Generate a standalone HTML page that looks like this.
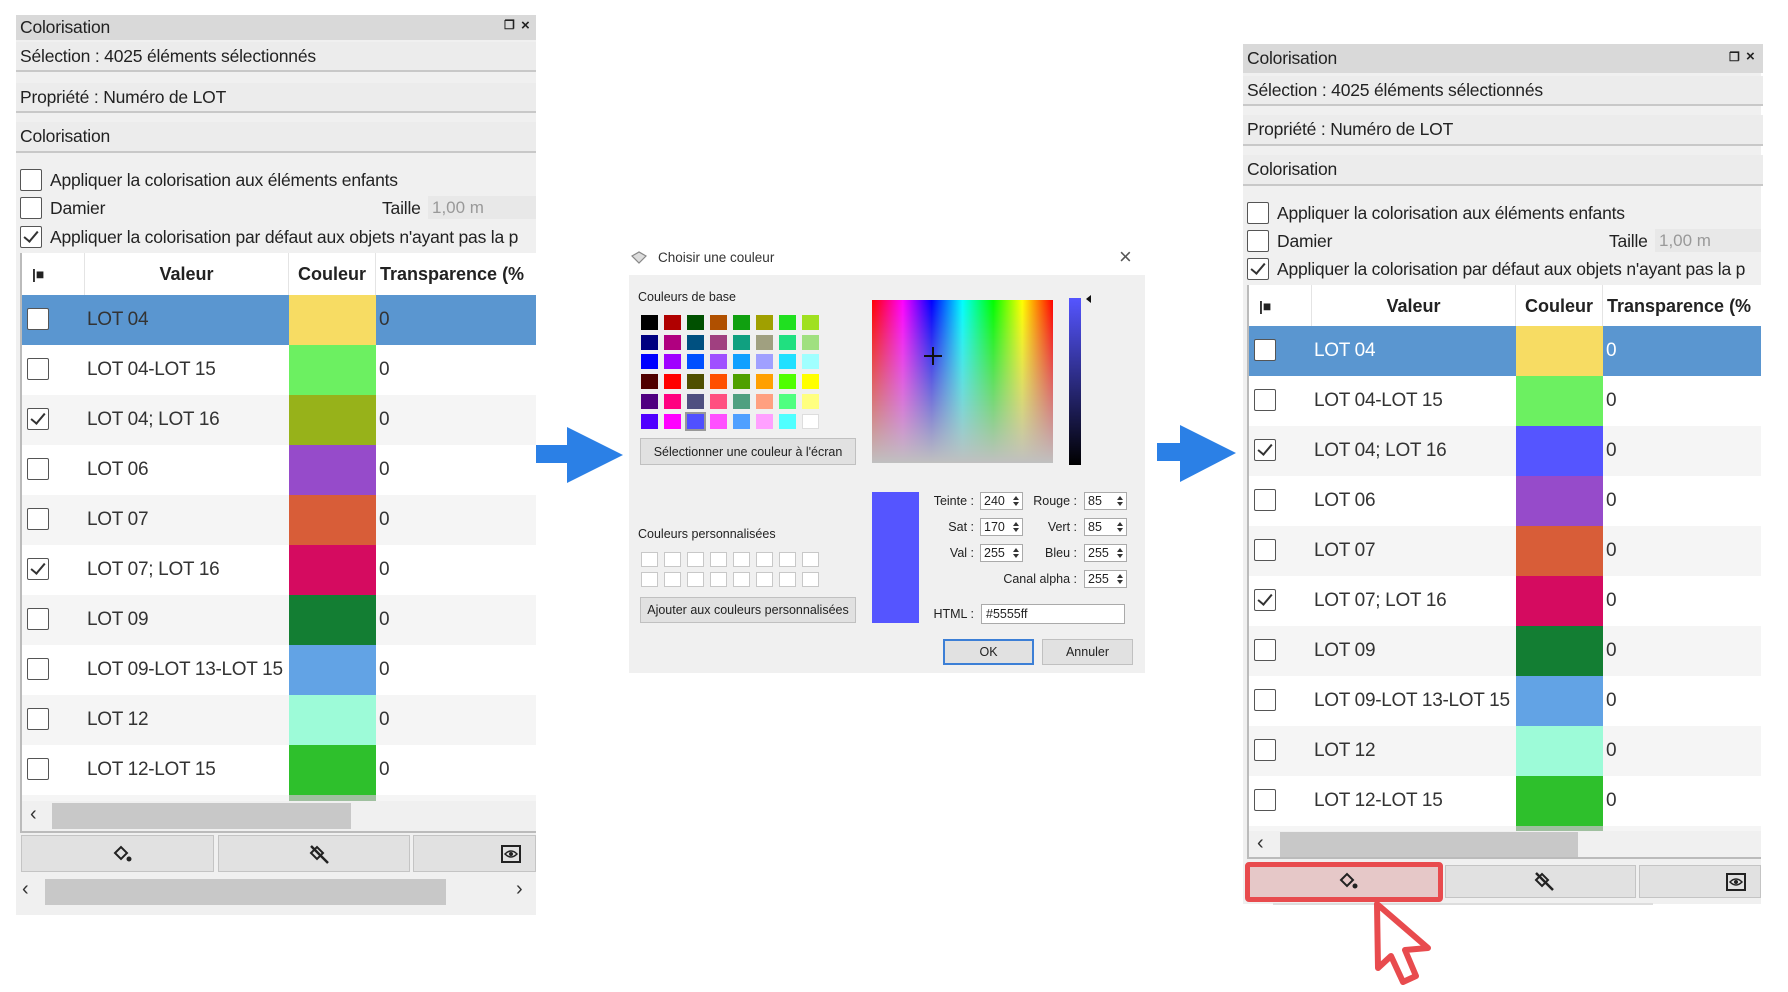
<!DOCTYPE html>
<html><head><meta charset="utf-8">
<style>
*{box-sizing:border-box;margin:0;padding:0}
body{width:1788px;height:992px;background:#fff;position:relative;overflow:hidden;font-family:"Liberation Sans",sans-serif;color:#222}
.a{position:absolute}
.panel{position:absolute;width:520px;height:900px;background:#f0f0f0}
.bar{position:absolute;left:0;width:520px;background:#ececec;border-bottom:2px solid #c8c8c8;font-size:17.5px;padding-left:4px;display:flex;align-items:center;letter-spacing:-0.2px}
.cb{position:absolute;width:22px;height:22px;border:1.5px solid #555;background:#fff;border-radius:2px}
.cb.k::after{content:"";position:absolute;left:6px;top:1px;width:6px;height:12px;border:solid #333;border-width:0 2px 2px 0;transform:rotate(40deg)}
.lbl{position:absolute;font-size:17.5px;white-space:nowrap;letter-spacing:-0.2px}
.tbl{position:absolute;left:4px;top:238px;width:516px;height:580px;background:#fff;border-left:2px solid #bbb;border-bottom:2px solid #bbb;overflow:hidden}
.hd{position:absolute;top:0;height:42px;font-weight:bold;font-size:18px;display:flex;align-items:center;justify-content:center;border-right:1px solid #e4e4e4}
.row{position:absolute;left:0;width:516px;height:50px}
.row .t{position:absolute;left:65px;top:14px;font-size:19px;color:#333;white-space:nowrap;letter-spacing:-0.3px}
.row .c{position:absolute;left:267px;width:87px;top:0;height:50px}
.row .z{position:absolute;left:357px;top:14px;font-size:19px;color:#333}
.row .cb{left:5px;top:13px}
.btn{position:absolute;top:820px;height:37px;background:#e1e1e1;border:1px solid #c4c4c4}
.sw{position:absolute;width:17px;height:15px}
.cu{position:absolute;width:17px;height:15px;background:#fff;border:1px solid #c8c8c8}
.dbtn{position:absolute;background:#e1e1e1;border:1px solid #c0c0c0;font-size:12.5px;display:flex;align-items:center;justify-content:center;white-space:nowrap}
.dl{position:absolute;font-size:12.5px;text-align:right;white-space:nowrap}
.spin{position:absolute;width:43px;height:18px;background:#fff;border:1px solid #aaa;font-size:12.5px;padding-left:3px;line-height:16px}
.spin::after{content:"";position:absolute;right:3px;top:3px;border:3px solid transparent;border-bottom:4px solid #333;border-top:0}
.spin::before{content:"";position:absolute;right:3px;bottom:3px;border:3px solid transparent;border-top:4px solid #333;border-bottom:0}
</style></head><body>

<!-- LEFT PANEL -->
<div class="panel" style="left:16px;top:15px;">
  <div class="bar" style="top:0;height:25px;background:#d9d9d9;border-bottom:none;">Colorisation</div>
  <div class="lbl" style="left:488px;top:3px;font-size:12px;font-weight:bold">&#x2750;</div>
  <div class="lbl" style="left:505px;top:2px;font-size:15px;font-weight:bold">×</div>
  <div class="bar" style="top:27px;height:30px;">Sélection : 4025 éléments sélectionnés</div>
  <div class="bar" style="top:68px;height:30px;">Propriété : Numéro de LOT</div>
  <div class="bar" style="top:107px;height:31px;">Colorisation</div>
  <div class="cb" style="left:4px;top:154px"></div><div class="lbl" style="left:34px;top:155px">Appliquer la colorisation aux éléments enfants</div>
  <div class="cb" style="left:4px;top:182px"></div><div class="lbl" style="left:34px;top:183px">Damier</div>
  <div class="lbl" style="left:366px;top:183px">Taille</div>
  <div class="a" style="left:412px;top:181px;width:108px;height:23px;background:#e8e8e8;color:#999;font-size:17px;padding:2px 4px">1,00 m</div>
  <div class="cb k" style="left:4px;top:211px"></div><div class="lbl" style="left:34px;top:212px">Appliquer la colorisation par défaut aux objets n'ayant pas la p</div>
  <div class="tbl">
    <div class="hd" style="left:0;width:63px;justify-content:flex-start;padding-left:10px;font-size:14px">|■</div>
    <div class="hd" style="left:63px;width:204px">Valeur</div>
    <div class="hd" style="left:267px;width:87px">Couleur</div>
    <div class="hd" style="left:354px;width:170px;justify-content:flex-start;padding-left:4px">Transparence (%</div>
    <div class="row" style="top:42px;background:#5a96d0"><div class="cb"></div><div class="t">LOT 04</div><div class="c" style="background:#f7dc63"></div><div class="z">0</div></div>
    <div class="row" style="top:92px;background:#fff"><div class="cb"></div><div class="t">LOT 04-LOT 15</div><div class="c" style="background:#6cf061"></div><div class="z">0</div></div>
    <div class="row" style="top:142px;background:#f5f5f5"><div class="cb k"></div><div class="t">LOT 04; LOT 16</div><div class="c" style="background:#97b21a"></div><div class="z">0</div></div>
    <div class="row" style="top:192px;background:#fff"><div class="cb"></div><div class="t">LOT 06</div><div class="c" style="background:#964bca"></div><div class="z">0</div></div>
    <div class="row" style="top:242px;background:#f5f5f5"><div class="cb"></div><div class="t">LOT 07</div><div class="c" style="background:#d85d38"></div><div class="z">0</div></div>
    <div class="row" style="top:292px;background:#fff"><div class="cb k"></div><div class="t">LOT 07; LOT 16</div><div class="c" style="background:#d50b60"></div><div class="z">0</div></div>
    <div class="row" style="top:342px;background:#f5f5f5"><div class="cb"></div><div class="t">LOT 09</div><div class="c" style="background:#137e33"></div><div class="z">0</div></div>
    <div class="row" style="top:392px;background:#fff"><div class="cb"></div><div class="t">LOT 09-LOT 13-LOT 15</div><div class="c" style="background:#62a3e5"></div><div class="z">0</div></div>
    <div class="row" style="top:442px;background:#f5f5f5"><div class="cb"></div><div class="t">LOT 12</div><div class="c" style="background:#9dfbd8"></div><div class="z">0</div></div>
    <div class="row" style="top:492px;background:#fff"><div class="cb"></div><div class="t">LOT 12-LOT 15</div><div class="c" style="background:#2ec02c"></div><div class="z">0</div></div>
    <div class="row" style="top:542px;height:6px;background:#f5f5f5"><div class="c" style="height:6px;background:#9fc09f"></div></div>
    <div class="a" style="left:0;top:548px;width:516px;height:30px;background:#f0f0f0"></div>
    <div class="a" style="left:8px;top:550px;font-size:20px;color:#333">‹</div>
    <div class="a" style="left:30px;top:550px;width:299px;height:26px;background:#c8c8c8"></div>
  </div>
  <div class="btn" style="left:5px;width:193px"></div>
  <div class="btn" style="left:202px;width:192px"></div>
  <div class="btn" style="left:397px;width:123px"></div>
  <svg class="a" style="left:96px;top:829px" width="24" height="20" viewBox="0 0 24 20"><path d="M3 9 L9 3 L15 9 L9 15 Z" fill="none" stroke="#222" stroke-width="2"/><circle cx="17" cy="15" r="2.5" fill="#222"/></svg>
  <svg class="a" style="left:292px;top:829px" width="24" height="22" viewBox="0 0 24 22"><path d="M3 9 L9 3 L15 9 L9 15 Z" fill="none" stroke="#222" stroke-width="2"/><path d="M3 2 L20 19" stroke="#222" stroke-width="2.5"/></svg>
  <svg class="a" style="left:484px;top:829px" width="22" height="20" viewBox="0 0 22 20"><rect x="2" y="2" width="18" height="16" fill="none" stroke="#222" stroke-width="2"/><path d="M5 10 Q11 4 17 10 Q11 16 5 10Z" fill="none" stroke="#222" stroke-width="1.5"/><circle cx="11" cy="10" r="2" fill="#222"/></svg>
  <div class="a" style="left:0;top:863px;width:520px;height:27px;background:#f0f0f0"></div>
  <div class="a" style="left:6px;top:863px;font-size:20px;color:#333">‹</div>
  <div class="a" style="left:29px;top:864px;width:401px;height:26px;background:#c8c8c8"></div>
  <div class="a" style="left:500px;top:863px;font-size:20px;color:#333">›</div>
</div>

<!-- LEFT ARROW -->
<svg class="a" style="left:530px;top:420px" width="100" height="70"><polygon points="6,25 37,25 37,7 93,35 37,63 37,43 6,43" fill="#2b80e6"/></svg>

<!-- DIALOG -->
<svg class="a" style="left:630px;top:250px" width="18" height="16" viewBox="0 0 18 16"><path d="M2 6 L9 2 L16 6 L9 13 Z" fill="#ddd" stroke="#888" stroke-width="1.2"/></svg>
<div class="a" style="left:658px;top:250px;font-size:13.5px;color:#333">Choisir une couleur</div>
<div class="a" style="left:1119px;top:244px;font-size:22px;color:#555;font-weight:300">×</div>
<div class="a" style="left:629px;top:275px;width:516px;height:398px;background:#f0f0f0"></div>
<div class="a" style="left:638px;top:290px;font-size:12.5px">Couleurs de base</div>
<div id="sw"></div>
<div class="dbtn" style="left:640px;top:438px;width:216px;height:27px">Sélectionner une couleur à l'écran</div>
<div class="a" style="left:872px;top:300px;width:181px;height:163px;background:linear-gradient(to bottom,rgba(192,192,192,0),#c0c0c0),linear-gradient(to right,#f00,#f0f 17%,#00f 33%,#0ff 50%,#0f0 67%,#ff0 83%,#f00)"></div>
<div class="a" style="left:924px;top:355px;width:18px;height:2px;background:#111"></div>
<div class="a" style="left:932px;top:347px;width:2px;height:18px;background:#111"></div>
<div class="a" style="left:1069px;top:298px;width:12px;height:167px;background:linear-gradient(#5555ff,#000)"></div>
<div class="a" style="left:1082px;top:295px;border:4px solid transparent;border-right:5px solid #111"></div>
<div class="a" style="left:638px;top:527px;font-size:12.5px">Couleurs personnalisées</div>
<div id="cu"></div>
<div class="dbtn" style="left:640px;top:597px;width:216px;height:26px">Ajouter aux couleurs personnalisées</div>
<div class="a" style="left:872px;top:492px;width:47px;height:131px;background:#5555ff"></div>
<div class="dl" style="left:900px;width:74px;top:494px">Teinte :</div><div class="spin" style="left:980px;top:492px">240</div>
<div class="dl" style="left:900px;width:74px;top:520px">Sat :</div><div class="spin" style="left:980px;top:518px">170</div>
<div class="dl" style="left:900px;width:74px;top:546px">Val :</div><div class="spin" style="left:980px;top:544px">255</div>
<div class="dl" style="left:1020px;width:57px;top:494px">Rouge :</div><div class="spin" style="left:1084px;top:492px">85</div>
<div class="dl" style="left:1020px;width:57px;top:520px">Vert :</div><div class="spin" style="left:1084px;top:518px">85</div>
<div class="dl" style="left:1020px;width:57px;top:546px">Bleu :</div><div class="spin" style="left:1084px;top:544px">255</div>
<div class="dl" style="left:980px;width:97px;top:572px">Canal alpha :</div><div class="spin" style="left:1084px;top:570px">255</div>
<div class="dl" style="left:920px;width:54px;top:607px">HTML :</div>
<div class="a" style="left:981px;top:604px;width:144px;height:20px;background:#fff;border:1px solid #aaa;font-size:12.5px;padding:2px 4px">#5555ff</div>
<div class="dbtn" style="left:943px;top:639px;width:91px;height:26px;border:2px solid #3c7fd6">OK</div>
<div class="dbtn" style="left:1042px;top:639px;width:91px;height:26px">Annuler</div>

<!-- RIGHT ARROW -->
<svg class="a" style="left:1150px;top:420px" width="100" height="70"><polygon points="7,23 30,23 30,5 86,33 30,62 30,41 7,41" fill="#2b80e6"/></svg>

<!-- RIGHT PANEL -->
<div class="panel" style="left:1243px;top:44px;width:518px;height:860px">
  <div class="bar" style="top:0;height:29px;background:#d9d9d9;border-bottom:none;">Colorisation</div>
  <div class="lbl" style="left:486px;top:6px;font-size:12px;font-weight:bold">&#x2750;</div>
  <div class="lbl" style="left:503px;top:4px;font-size:15px;font-weight:bold">×</div>
  <div class="bar" style="top:32px;height:30px;">Sélection : 4025 éléments sélectionnés</div>
  <div class="bar" style="top:71px;height:31px;">Propriété : Numéro de LOT</div>
  <div class="bar" style="top:111px;height:31px;">Colorisation</div>
  <div class="cb" style="left:4px;top:158px"></div><div class="lbl" style="left:34px;top:159px">Appliquer la colorisation aux éléments enfants</div>
  <div class="cb" style="left:4px;top:186px"></div><div class="lbl" style="left:34px;top:187px">Damier</div>
  <div class="lbl" style="left:366px;top:187px">Taille</div>
  <div class="a" style="left:412px;top:185px;width:106px;height:23px;background:#e8e8e8;color:#999;font-size:17px;padding:2px 4px">1,00 m</div>
  <div class="cb k" style="left:4px;top:214px"></div><div class="lbl" style="left:34px;top:215px">Appliquer la colorisation par défaut aux objets n'ayant pas la p</div>
  <div class="tbl" style="top:241px;width:514px;height:574px">
    <div class="hd" style="left:0;width:63px;justify-content:flex-start;padding-left:10px;font-size:14px">|■</div>
    <div class="hd" style="left:63px;width:204px">Valeur</div>
    <div class="hd" style="left:267px;width:87px">Couleur</div>
    <div class="hd" style="left:354px;width:170px;justify-content:flex-start;padding-left:4px">Transparence (%</div>
    <div class="row" style="top:41px;background:#5a96d0"><div class="cb"></div><div class="t" style="color:#fff">LOT 04</div><div class="c" style="background:#f7dc63"></div><div class="z" style="color:#fff">0</div></div>
    <div class="row" style="top:91px;background:#fff"><div class="cb"></div><div class="t">LOT 04-LOT 15</div><div class="c" style="background:#6cf061"></div><div class="z">0</div></div>
    <div class="row" style="top:141px;background:#f5f5f5"><div class="cb k"></div><div class="t">LOT 04; LOT 16</div><div class="c" style="background:#5555ff"></div><div class="z">0</div></div>
    <div class="row" style="top:191px;background:#fff"><div class="cb"></div><div class="t">LOT 06</div><div class="c" style="background:#964bca"></div><div class="z">0</div></div>
    <div class="row" style="top:241px;background:#f5f5f5"><div class="cb"></div><div class="t">LOT 07</div><div class="c" style="background:#d85d38"></div><div class="z">0</div></div>
    <div class="row" style="top:291px;background:#fff"><div class="cb k"></div><div class="t">LOT 07; LOT 16</div><div class="c" style="background:#d50b60"></div><div class="z">0</div></div>
    <div class="row" style="top:341px;background:#f5f5f5"><div class="cb"></div><div class="t">LOT 09</div><div class="c" style="background:#137e33"></div><div class="z">0</div></div>
    <div class="row" style="top:391px;background:#fff"><div class="cb"></div><div class="t">LOT 09-LOT 13-LOT 15</div><div class="c" style="background:#62a3e5"></div><div class="z">0</div></div>
    <div class="row" style="top:441px;background:#f5f5f5"><div class="cb"></div><div class="t">LOT 12</div><div class="c" style="background:#9dfbd8"></div><div class="z">0</div></div>
    <div class="row" style="top:491px;background:#fff"><div class="cb"></div><div class="t">LOT 12-LOT 15</div><div class="c" style="background:#2ec02c"></div><div class="z">0</div></div>
    <div class="row" style="top:541px;height:6px;background:#f5f5f5"><div class="c" style="height:6px;background:#9fc09f"></div></div>
    <div class="a" style="left:0;top:546px;width:514px;height:28px;background:#f0f0f0"></div>
    <div class="a" style="left:8px;top:547px;font-size:20px;color:#333">‹</div>
    <div class="a" style="left:31px;top:547px;width:298px;height:26px;background:#c8c8c8"></div>
  </div>
  <div class="btn" style="top:821px;height:33px;left:2px;width:198px;background:#e6c8c8"></div>
  <div class="btn" style="top:821px;height:33px;left:202px;width:191px"></div>
  <div class="btn" style="top:821px;height:33px;left:396px;width:122px"></div>
  <svg class="a" style="left:95px;top:827px" width="24" height="20" viewBox="0 0 24 20"><path d="M3 9 L9 3 L15 9 L9 15 Z" fill="none" stroke="#222" stroke-width="2"/><circle cx="17" cy="15" r="2.5" fill="#222"/></svg>
  <svg class="a" style="left:290px;top:827px" width="24" height="22" viewBox="0 0 24 22"><path d="M3 9 L9 3 L15 9 L9 15 Z" fill="none" stroke="#222" stroke-width="2"/><path d="M3 2 L20 19" stroke="#222" stroke-width="2.5"/></svg>
  <svg class="a" style="left:482px;top:828px" width="22" height="20" viewBox="0 0 22 20"><rect x="2" y="2" width="18" height="16" fill="none" stroke="#222" stroke-width="2"/><path d="M5 10 Q11 4 17 10 Q11 16 5 10Z" fill="none" stroke="#222" stroke-width="1.5"/><circle cx="11" cy="10" r="2" fill="#222"/></svg>
  <div class="a" style="left:30px;top:859px;width:380px;height:2px;background:#ddd"></div>
</div>
<div class="a" style="left:1245px;top:862px;width:198px;height:40px;border:5px solid #e84b4e;border-radius:4px"></div>
<svg class="a" style="left:1360px;top:895px" width="80" height="97"><polygon points="17,9 18,73 31,61 43,87 56,81 45,55 68,53" fill="#fff" stroke="#e84b4e" stroke-width="6" stroke-linejoin="round"/></svg>

<script>
var c=[["#000","#b00000","#005000","#b05000","#10a010","#a0a000","#20e020","#a0e020"],
["#000080","#b00080","#005080","#a04080","#10a080","#a0a080","#20e080","#a0e080"],
["#0000ff","#a000ff","#0050ff","#a050ff","#10a0ff","#a0a0ff","#20e0ff","#a0ffff"],
["#500000","#ff0000","#505000","#ff5000","#50a000","#ffa000","#50ff00","#ffff00"],
["#500080","#ff0080","#505080","#ff5080","#50a080","#ffa080","#50ff80","#ffff80"],
["#5000ff","#ff00ff","#5050ff","#ff50ff","#50a0ff","#ffa0ff","#50ffff","#ffffff"]];
var h="";
for(var r=0;r<6;r++)for(var k=0;k<8;k++){h+='<div class="sw" style="left:'+(641+k*23)+'px;top:'+(315+r*19.7)+'px;background:'+c[r][k]+(r==5&&k==2?';outline:2px solid #999':'')+(r==5&&k==7?';border:1px solid #ddd':'')+'"></div>';}
document.getElementById("sw").outerHTML=h;
h="";
for(var r=0;r<2;r++)for(var k=0;k<8;k++){h+='<div class="cu" style="left:'+(641+k*23)+'px;top:'+(552+r*20)+'px"></div>';}
document.getElementById("cu").outerHTML=h;
</script>
</body></html>
